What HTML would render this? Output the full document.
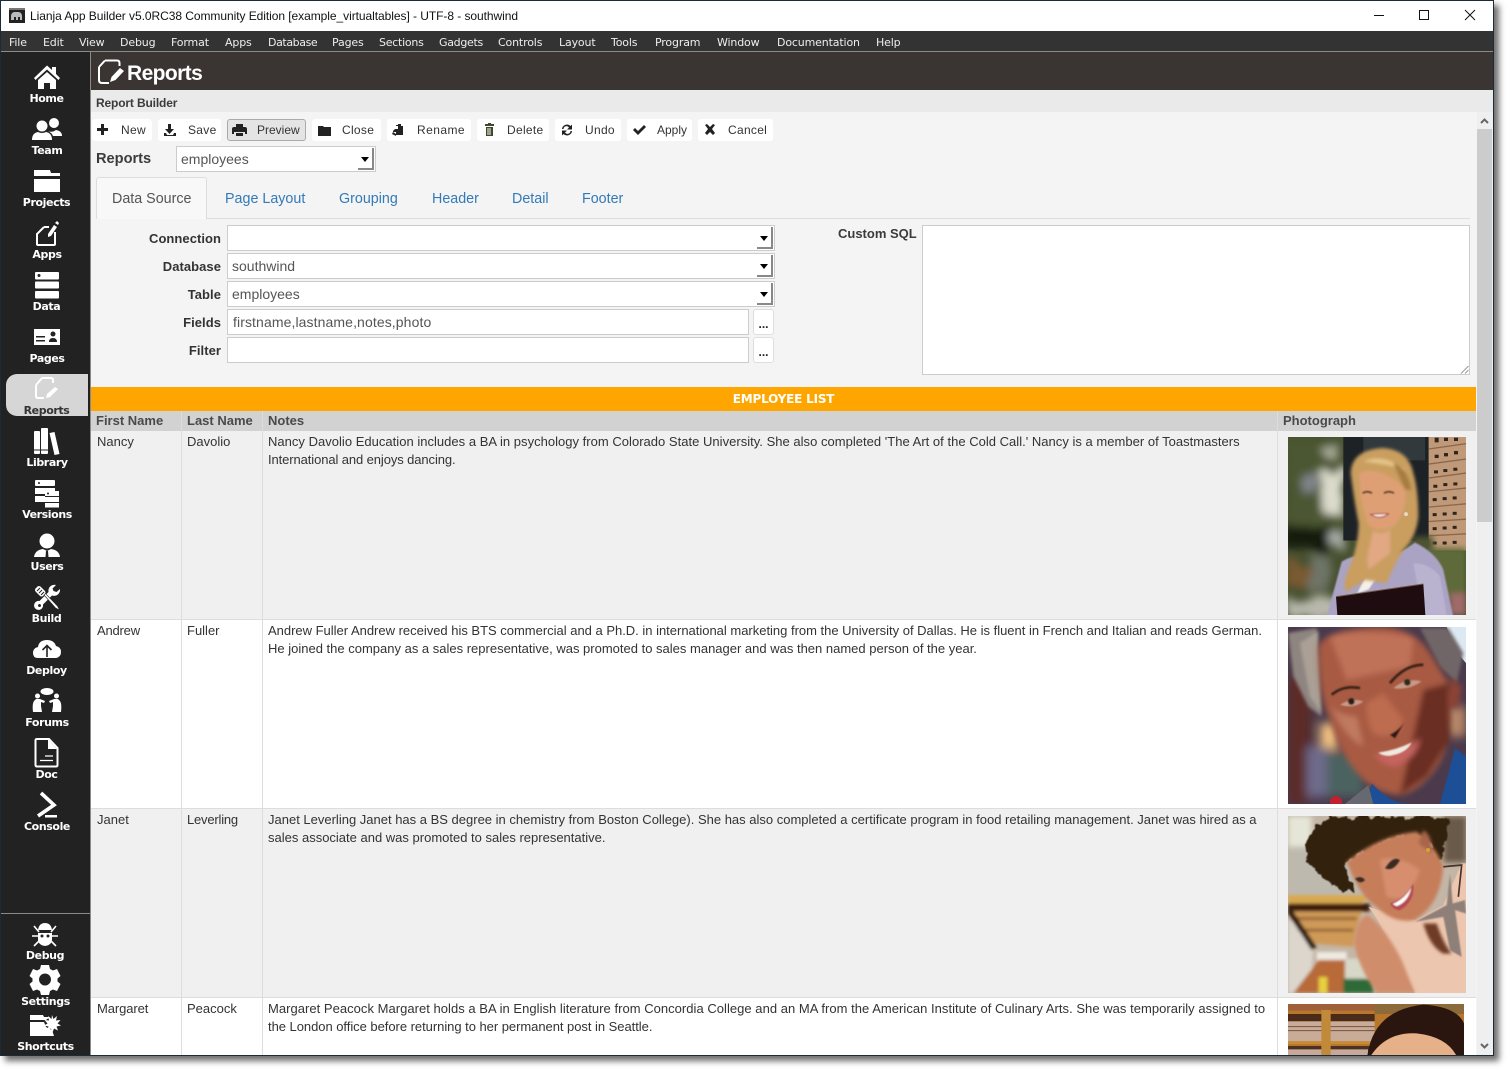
<!DOCTYPE html>
<html><head><meta charset="utf-8"><title>Lianja App Builder</title>
<style>
html,body{margin:0;padding:0;background:#fff;width:1509px;height:1071px;overflow:hidden}
*{box-sizing:border-box}
body{font-family:"Liberation Sans",sans-serif;color:#333;position:relative}
.a,.t{position:absolute}
.t{white-space:nowrap;line-height:18px}
#win{position:absolute;left:0;top:0;width:1494px;height:1056px;background:#f4f4f4;border:1px solid #1c2b38;box-shadow:5px 5px 6px rgba(60,60,60,.75);overflow:hidden}
#app{position:absolute;left:-1px;top:-1px;width:1494px;height:1056px}
.m{position:absolute;top:34px;font:11px/18px "DejaVu Sans",sans-serif;color:#eee;white-space:nowrap;letter-spacing:-.15px}
.b{position:absolute;top:119px;height:22px;background:#fff;border-radius:3px}
.bt{position:absolute;top:120px;font-size:12px;line-height:20px;color:#333;white-space:nowrap;letter-spacing:.3px}
.tab{position:absolute;top:190px;font-size:14.3px;line-height:18px;color:#337ab7;white-space:nowrap}
.lab{position:absolute;right:1273px;font-size:13px;font-weight:bold;line-height:20px;color:#333;white-space:nowrap;letter-spacing:.05px}
.box{position:absolute;background:#fff;border:1px solid #ccc;height:26px;font-size:14px;line-height:24px;padding-left:4px;color:#555;white-space:nowrap}
.dd i{position:absolute;right:1px;bottom:1px;width:16px;height:22px;border-right:2px solid #888;border-bottom:2px solid #888}
.dd i:after{content:"";position:absolute;left:3px;top:9px;border:4.500px solid transparent;border-top:5px solid #000;border-bottom:0}
.dots{position:absolute;left:753px;width:21px;height:26px;background:#fff;border:1px solid #ddd;border-radius:3px;font-size:12px;line-height:28px;text-align:center;color:#222;font-weight:bold}
.hc{position:absolute;top:411px;height:20px;background:#d2d2d2;font-size:13px;font-weight:bold;line-height:19px;color:#4a4a4a;padding-left:5px;white-space:nowrap}
.row{position:absolute;left:91px;width:1386px;height:189px;border-bottom:1px solid #ddd}
.v{position:absolute;width:1px;background:#ddd}
.c{position:absolute;font-size:13px;line-height:18px;color:#333;white-space:nowrap;margin-top:1px}
.n{letter-spacing:0}
svg{position:absolute;display:block;overflow:hidden}
</style></head>
<body>
<div id="win"><div id="app">

<!-- title bar -->
<div class="a" style="left:0;top:1px;width:1494px;height:30px;background:#fff"></div>
<svg style="left:9px;top:8px" width="16" height="15" viewBox="0 0 16 15"><rect width="16" height="15" fill="#222"/><rect x="0" y="0" width="16" height="2" fill="#777"/><path d="M2 12V8q0-3 3-4h5q3 1 3 4v4h-2V9H9v3H7V9H5v3zM13 8l1.500 3" fill="#bbb"/></svg>
<div class="t" style="left:30px;top:7px;font:12px/18px 'Liberation Sans',sans-serif;color:#111;letter-spacing:-.055px">Lianja App Builder v5.0RC38 Community Edition [example_virtualtables] - UTF-8 - southwind</div>
<svg style="left:1370px;top:6px" width="112" height="20" viewBox="0 0 112 20" fill="none" stroke="#111"><path d="M4 9.500H14"/><rect x="49.500" y="4.500" width="9" height="9"/><path d="M95 4l10 10M105 4L95 14"/></svg>

<!-- menu -->
<div class="a" style="left:0;top:31px;width:1494px;height:20px;background:#333"></div>
<div class="a" style="left:0;top:51px;width:1494px;height:1px;background:#8a8a86"></div>
<span class="m" style="left:9px">File</span><span class="m" style="left:43px">Edit</span><span class="m" style="left:79px">View</span><span class="m" style="left:120px">Debug</span><span class="m" style="left:171px">Format</span><span class="m" style="left:225px">Apps</span><span class="m" style="left:268px;letter-spacing:-.4px">Database</span><span class="m" style="left:332px">Pages</span><span class="m" style="left:379px;letter-spacing:-.25px">Sections</span><span class="m" style="left:439px;letter-spacing:-.3px">Gadgets</span><span class="m" style="left:498px">Controls</span><span class="m" style="left:559px">Layout</span><span class="m" style="left:611px">Tools</span><span class="m" style="left:655px">Program</span><span class="m" style="left:717px">Window</span><span class="m" style="left:777px">Documentation</span><span class="m" style="left:876px">Help</span>

<!-- header -->
<div class="a" style="left:91px;top:52px;width:1403px;height:38px;background:#3a3533"></div>
<svg style="left:97px;top:58px" width="30" height="28" viewBox="0 0 30 28"><path d="M8 2.500h12q2.500 0 2.500 2.500v3M2 9L8 2.500M2 9v13q0 3 3 3h7" fill="none" stroke="#fff" stroke-width="2"/><path d="M13 24l1.500-5L23 10l4 3-8.500 9z" fill="#fff"/></svg>
<div class="t" style="left:127px;top:62px;font-size:21px;line-height:24px;font-weight:bold;color:#fff;letter-spacing:-.6px">Reports</div>
<div class="a" style="left:91px;top:90px;width:1403px;height:22px;background:#eaeaea"></div>
<div class="t" style="left:96px;top:94px;font-size:12px;font-weight:bold;color:#3b3b3b;letter-spacing:-.15px">Report Builder</div>

<!-- toolbar -->
<div class="b" style="left:92px;width:60px"></div>
<div class="b" style="left:158px;width:63px"></div>
<div class="b" style="left:227px;width:79px;background:#e4e4e4;border:1px solid #aaa"></div>
<div class="b" style="left:312px;width:69px"></div>
<div class="b" style="left:387px;width:84px"></div>
<div class="b" style="left:477px;width:72px"></div>
<div class="b" style="left:555px;width:66px"></div>
<div class="b" style="left:627px;width:65px"></div>
<div class="b" style="left:698px;width:75px"></div>
<span class="bt" style="left:121px">New</span><span class="bt" style="left:188px">Save</span><span class="bt" style="left:257px;letter-spacing:0">Preview</span><span class="bt" style="left:342px">Close</span><span class="bt" style="left:417px;letter-spacing:.45px">Rename</span><span class="bt" style="left:507px">Delete</span><span class="bt" style="left:585px">Undo</span><span class="bt" style="left:657px;letter-spacing:0">Apply</span><span class="bt" style="left:728px">Cancel</span>
<svg style="left:0;top:110px" width="800" height="40" viewBox="0 110 800 40" fill="#222">
<path d="M101 124h3v4h4v3h-4v4h-3v-4h-4v-3h4z"/>
<path d="M168 124h3v5h3l-4.500 5-4.500-5h3zM164 133h2l1 2h6l1-2h2v3h-12z"/>
<path d="M236 124h7v3h2q2 0 2 2v5h-2v-2h-11v2h-2v-5q0-2 2-2h2zM236 133h7v3h-7z"/>
<path d="M318 126h5l1 1h7v9h-13zM318 128h13v1h-13z"/>
<path d="M398 124h3v2h2v9h-7v-3h-3v-1l2-2h3v-3h-2v-1h2zM393 132l3 2v2l-4-2z"/>
<g fill="#3d4a2a"><path d="M488 123h3v1h3v2h-9v-2h3zM486 127h7v9h-7zM487.500 128v7h1v-7zM489.500 128v7h1v-7z" fill-rule="evenodd"/></g>
<path d="M562 129a5 5 0 0 1 8.500-3l1.500-1.500v5h-5l2-2a3 3 0 0 0-5.500 1.500zM572 131a5 5 0 0 1-8.500 3L562 135.500v-5h5l-2 2a3 3 0 0 0 5.500-1.500z"/>
<path d="M633 130l2-2 3 3 6-6 2 2-8 8z"/>
<path d="M705 125l2-1 3 3 3-3 2 1-3 4 3 4-2 2-3-3-3 3-2-2 3-4z"/>
</svg>

<!-- reports select -->
<div class="t" style="left:96px;top:150px;font-size:14.600px;font-weight:bold;color:#3b3b3b">Reports</div>
<div class="box dd" style="left:176px;top:146px;width:200px;font-size:14px;line-height:25px"><span>employees</span><i></i></div>

<!-- tabs -->
<div class="a" style="left:96px;top:218px;width:1374px;height:1px;background:#ddd"></div>
<div class="a" style="left:96px;top:177px;width:111px;height:42px;background:#f8f8f8;border:1px solid #ddd;border-bottom:0;border-radius:3px 3px 0 0"></div>
<div class="tab" style="left:112px;color:#555">Data Source</div>
<div class="tab" style="left:225px">Page Layout</div><div class="tab" style="left:339px">Grouping</div><div class="tab" style="left:432px">Header</div><div class="tab" style="left:512px">Detail</div><div class="tab" style="left:582px">Footer</div>

<!-- form -->
<div class="lab" style="top:229px">Connection</div><div class="lab" style="top:257px">Database</div><div class="lab" style="top:285px">Table</div><div class="lab" style="top:313px">Fields</div><div class="lab" style="top:341px">Filter</div>
<div class="box dd" style="left:227px;top:225px;width:548px"><i></i></div>
<div class="box dd" style="left:227px;top:253px;width:548px">southwind<i></i></div>
<div class="box dd" style="left:227px;top:281px;width:548px">employees<i></i></div>
<div class="box" style="left:227px;top:309px;width:522px;padding-left:5px;letter-spacing:.1px">firstname,lastname,notes,photo</div>
<div class="box" style="left:227px;top:337px;width:522px"></div>
<div class="dots" style="top:309px">...</div><div class="dots" style="top:337px">...</div>
<div class="t" style="left:838px;top:225px;font-size:13px;font-weight:bold;color:#3b3b3b">Custom&nbsp;SQL</div>
<div class="a" style="left:922px;top:225px;width:548px;height:150px;background:#fff;border:1px solid #ccc"></div>
<svg style="left:1458px;top:363px" width="12" height="12" stroke="#999" fill="none"><path d="M3 10.500L10.500 3M7 10.500L10.500 7"/></svg>

<!-- table -->
<div class="a" style="left:91px;top:387px;width:1385px;height:24px;background:#ffa500;color:#fff;font:bold 12px/25px 'DejaVu Sans',sans-serif;text-align:center;letter-spacing:-.2px">EMPLOYEE LIST</div>
<div class="hc" style="left:91px;width:90px">First Name</div><div class="hc" style="left:182px;width:80px">Last Name</div><div class="hc" style="left:263px;width:1014px">Notes</div><div class="hc" style="left:1278px;width:198px">Photograph</div>
<div class="row" style="top:431px;background:#f0f0f0"></div>
<div class="row" style="top:620px;background:#fff"></div>
<div class="row" style="top:809px;background:#f0f0f0"></div>
<div class="row" style="top:998px;background:#fff;height:58px;border:0"></div>
<div class="v" style="left:181px;top:411px;height:645px"></div><div class="v" style="left:262px;top:411px;height:645px"></div><div class="v" style="left:1277px;top:411px;height:645px"></div>
<div class="a" style="left:1476px;top:387px;width:1px;height:669px;background:#f4f4f4"></div>

<div class="c" style="left:97px;top:432px">Nancy</div><div class="c" style="left:187px;top:432px">Davolio</div>
<div class="c n" style="left:268px;top:432px;letter-spacing:.02px">Nancy Davolio Education includes a BA in psychology from Colorado State University. She also completed 'The Art of the Cold Call.' Nancy is a member of Toastmasters</div>
<div class="c n" style="left:268px;top:450px;letter-spacing:-.1px">International and enjoys dancing.</div>
<div class="c" style="left:97px;top:621px;letter-spacing:-.2px">Andrew</div><div class="c" style="left:187px;top:621px">Fuller</div>
<div class="c n" style="left:268px;top:621px;letter-spacing:-.01px">Andrew Fuller Andrew received his BTS commercial and a Ph.D. in international marketing from the University of Dallas. He is fluent in French and Italian and reads German.</div>
<div class="c n" style="left:268px;top:639px">He joined the company as a sales representative, was promoted to sales manager and was then named person of the year.</div>
<div class="c" style="left:97px;top:810px">Janet</div><div class="c" style="left:187px;top:810px;letter-spacing:-.2px">Leverling</div>
<div class="c n" style="left:268px;top:810px">Janet Leverling Janet has a BS degree in chemistry from Boston College). She has also completed a certificate program in food retailing management. Janet was hired as a</div>
<div class="c n" style="left:268px;top:828px">sales associate and was promoted to sales representative.</div>
<div class="c" style="left:97px;top:999px;letter-spacing:-.1px">Margaret</div><div class="c" style="left:187px;top:999px">Peacock</div>
<div class="c n" style="left:268px;top:999px;letter-spacing:.03px">Margaret Peacock Margaret holds a BA in English literature from Concordia College and an MA from the American Institute of Culinary Arts. She was temporarily assigned to</div>
<div class="c n" style="left:268px;top:1017px;letter-spacing:-.04px">the London office before returning to her permanent post in Seattle.</div>

<!-- photo filters -->
<svg width="0" height="0" style="left:0;top:0"><defs>
<filter id="b2" x="-20%" y="-20%" width="140%" height="140%"><feGaussianBlur stdDeviation="2"/></filter>
<filter id="b5" x="-20%" y="-20%" width="140%" height="140%"><feGaussianBlur stdDeviation="5"/></filter>
<filter id="b8" x="-20%" y="-20%" width="140%" height="140%"><feGaussianBlur stdDeviation="9"/></filter>
<filter id="b16" x="-30%" y="-30%" width="160%" height="160%"><feGaussianBlur stdDeviation="14"/></filter>
<filter id="curl" x="-20%" y="-20%" width="140%" height="140%"><feTurbulence type="fractalNoise" baseFrequency=".035" numOctaves="3" seed="7" result="n"/><feDisplacementMap in="SourceGraphic" in2="n" scale="34" xChannelSelector="R" yChannelSelector="G"/><feGaussianBlur stdDeviation="1.500"/></filter>
<filter id="fol" x="-20%" y="-20%" width="140%" height="140%"><feTurbulence type="fractalNoise" baseFrequency=".02" numOctaves="2" seed="3" result="n"/><feDisplacementMap in="SourceGraphic" in2="n" scale="50" xChannelSelector="R" yChannelSelector="G"/><feGaussianBlur stdDeviation="13"/></filter>
</defs></svg>

<!-- Nancy -->
<svg style="left:1288px;top:437px" width="178" height="178" viewBox="24 22 534 533" preserveAspectRatio="none">
<rect x="24" y="22" width="534" height="533" fill="#46502f"/>
<g filter="url(#fol)">
<rect x="20" y="20" width="170" height="300" fill="#4c5633"/>
<rect x="125" y="125" width="65" height="130" fill="#dcdccc"/>
<rect x="125" y="55" width="60" height="40" fill="#a8ac98"/>
<rect x="75" y="130" width="40" height="50" fill="#80858a"/>
<rect x="20" y="290" width="130" height="70" fill="#181a10"/>
<rect x="20" y="400" width="80" height="70" fill="#7a5a30"/>
<rect x="90" y="370" width="60" height="120" fill="#6e7468"/>
<rect x="20" y="505" width="160" height="60" fill="#b8b8ac"/>
<rect x="150" y="300" width="45" height="50" fill="#a8aca8"/>
</g>
<rect x="190" y="22" width="256" height="310" fill="#1d2226"/>
<rect x="250" y="22" width="185" height="70" fill="#31393d"/>
<rect x="446" y="22" width="112" height="340" fill="#c09a78"/>
<g stroke="#8a6850" stroke-width="4"><path d="M446 58L558 42M446 103L558 88M446 145L558 130M446 186L558 175M446 232L558 222M446 275L558 268M446 318L558 312"/></g>
<g fill="#30241e"><rect x="464" y="24" width="12" height="14"/><rect x="492" y="24" width="12" height="10"/><rect x="522" y="24" width="12" height="10"/><rect x="464" y="75" width="12" height="10"/><rect x="492" y="70" width="12" height="10"/><rect x="522" y="64" width="12" height="10"/><rect x="462" y="122" width="12" height="9"/><rect x="490" y="118" width="12" height="9"/><rect x="520" y="114" width="12" height="9"/><rect x="460" y="165" width="12" height="9"/><rect x="490" y="160" width="12" height="9"/><rect x="520" y="158" width="12" height="9"/><rect x="458" y="205" width="12" height="9"/><rect x="488" y="202" width="12" height="9"/><rect x="518" y="200" width="12" height="9"/><rect x="458" y="250" width="12" height="9"/><rect x="488" y="248" width="12" height="9"/><rect x="518" y="246" width="12" height="9"/><rect x="458" y="292" width="12" height="9"/><rect x="488" y="290" width="12" height="9"/><rect x="518" y="288" width="12" height="9"/><rect x="458" y="335" width="12" height="9"/><rect x="488" y="335" width="12" height="9"/><rect x="518" y="333" width="12" height="9"/></g>
<g filter="url(#b8)"><rect x="440" y="355" width="118" height="150" fill="#5f6a3a"/><rect x="510" y="490" width="48" height="65" fill="#a06a6a"/><rect x="400" y="320" width="60" height="40" fill="#4d5230"/></g>
<g filter="url(#b2)">
<path d="M140 560L185 395Q240 360 300 400Q360 370 405 338Q470 370 490 420L520 560z" fill="#aaa3c4"/>
<path d="M400 400Q450 400 480 440L500 555H430z" fill="#b9b3d0"/>
<path d="M232 490L262 430H298L266 478z" fill="#f4f0e8"/>
</g>
<g filter="url(#b5)">
<path d="M212 130Q215 60 310 55Q385 60 400 130Q415 180 415 260Q410 320 370 360Q340 410 320 460L255 450L200 485Q185 470 205 420Q235 350 236 280Q225 230 212 130z" fill="#c99e5f"/>
<path d="M238 130Q300 105 375 175Q385 240 340 290Q300 310 265 285Q240 230 238 130z" fill="#df9f74"/>
<path d="M280 300Q300 320 330 300L330 370L265 420L262 380z" fill="#e2a884"/>
<path d="M250 95Q310 68 385 125Q360 112 300 102z" fill="#e6c588"/>
<path d="M340 100Q380 110 395 180L375 180z" fill="#a67c40"/>
</g>
<g filter="url(#b2)">
<path d="M272 254Q298 250 325 252Q300 272 272 254z" fill="#f2e8de" stroke="#a94f46" stroke-width="3"/>
<path d="M248 190Q262 182 276 190M312 190Q326 182 342 190" stroke="#5a4028" stroke-width="5" fill="none"/>
</g>
<circle cx="378" cy="253" r="6" fill="#e8d8c0"/>
<path d="M168 500L430 462L436 555H172z" fill="#1f0c10"/>
<path d="M168 500L430 462" stroke="#7a5a48" stroke-width="3"/>
</svg>

<!-- Andrew -->
<svg style="left:1288px;top:627px" width="178" height="177" viewBox="24 22 534 530" preserveAspectRatio="none">
<rect x="24" y="22" width="534" height="530" fill="#4a3a4c"/>
<g filter="url(#b16)">
<rect x="24" y="170" width="70" height="380" fill="#5c2a28"/>
<rect x="120" y="310" width="55" height="80" fill="#f0c080"/>
<rect x="100" y="400" width="150" height="130" fill="#4c6460"/>
<rect x="500" y="260" width="58" height="90" fill="#b88868"/>
<rect x="80" y="380" width="60" height="150" fill="#6e6a8c"/>
</g>
<path d="M500 22H558V130L525 90z" fill="#dde9f2"/>
<g filter="url(#b5)"><path d="M24 40L110 25 120 120 125 290 85 260 40 170z" fill="#8e8580"/><path d="M420 25H505L550 100L530 190L480 140z" fill="#6f6668"/><path d="M60 70L115 35 115 120 125 280 90 230z" fill="#aaa096"/></g>
<g filter="url(#b8)">
<path d="M115 80Q140 25 300 22Q400 22 450 100L505 190Q520 300 500 380Q460 490 370 525Q300 525 250 480Q180 410 150 300Q115 230 115 80z" fill="#a85a42"/>
<path d="M150 50Q280 25 400 55L390 140L200 180z" fill="#c07258"/>
<path d="M510 170L545 200L535 265L510 260z" fill="#8d4334"/>
<path d="M430 210L505 190L510 360L440 470L360 525z" fill="#6a2e22"/>
<path d="M260 250L310 220L370 300L360 330Q320 360 280 340Q260 310 260 250z" fill="#bd6c50"/>
<path d="M280 400Q350 410 420 355Q410 420 340 440Q300 430 280 400z" fill="#c6645e"/>
<path d="M150 250Q170 290 230 290L250 380Q190 350 150 250z" fill="#c07a60"/>
</g>
<g filter="url(#b2)">
<path d="M330 345Q360 330 375 305L345 355z" fill="#2e1512"/>
<path d="M295 398Q350 390 395 368Q380 400 330 408Q305 408 295 398z" fill="#efe8de"/>
<path d="M155 225Q190 195 240 205M330 190Q375 135 430 135" stroke="#3a2018" stroke-width="8" fill="none"/>
<path d="M180 255Q215 232 250 245Q220 268 180 255zM340 205Q380 172 425 185Q385 213 340 205z" fill="#c89a88"/>
<circle cx="214" cy="245" r="10" fill="#2a1c12"/><circle cx="382" cy="188" r="10" fill="#2a2a18"/>
</g>
<path d="M265 552L275 490Q330 550 380 552zM480 552L525 385L558 410V552z" fill="#1c4f96"/>
<path d="M195 552L265 495L280 552z" fill="#666a70"/><circle cx="168" cy="546" r="18" fill="#c02030"/>
</svg>

<!-- Janet -->
<svg style="left:1288px;top:816px" width="178" height="177" viewBox="24 18 534 530" preserveAspectRatio="none">
<rect x="24" y="18" width="534" height="530" fill="#c4b6a6"/>
<g filter="url(#b8)">
<rect x="24" y="18" width="70" height="100" fill="#e6e6d8"/>
<rect x="24" y="110" width="240" height="150" fill="#bdb9ae"/>
<rect x="490" y="18" width="70" height="140" fill="#6a5a48"/>
</g>
<g filter="url(#b5)">
<path d="M24 255H270L240 285H24z" fill="#d8a850"/>
<rect x="24" y="280" width="245" height="24" fill="#3e1c0e"/>
<path d="M30 304H245L220 410L100 400z" fill="#cf9a58"/>
<path d="M30 325H230M50 360H220" stroke="#8a5a2e" stroke-width="8"/>
<path d="M24 320L100 420L90 548H24z" fill="#dcd6cc"/>
<path d="M40 548L120 445H205L190 548z" fill="#b86a38"/>
<rect x="110" y="425" width="90" height="24" fill="#eeeae2"/>
<rect x="190" y="505" width="90" height="43" fill="#2e6a38"/>
<rect x="116" y="500" width="26" height="48" fill="#e8d040"/>
<rect x="195" y="445" width="70" height="60" fill="#d8d8c8"/>
<path d="M24 280L110 410L95 420L24 310z" fill="#2e1a10"/>
</g>
<path d="M265 290L405 330 490 285 545 160 558 160V548H405L350 450Q300 330 265 290z" fill="#ecc6ae"/>
<g filter="url(#b5)"><path d="M222 400Q230 320 265 315Q320 360 365 450L405 548H290Q240 480 222 400z" fill="#d08d6c"/><path d="M470 340Q490 400 515 430H490Q450 410 430 340z" fill="#6e3a28"/></g>
<path d="M75 125Q85 30 180 22H505Q505 90 480 160L450 100L410 70Q290 90 195 160Q210 220 225 248Q160 230 110 190Q80 160 75 125z" fill="#33200f" filter="url(#curl)"/>
<g filter="url(#b5)">
<path d="M200 155Q300 75 410 65Q470 110 490 170Q480 290 400 330Q340 340 290 290Q240 260 200 155z" fill="#c67e5a"/>
<path d="M430 60Q460 80 455 130L415 100z" fill="#a8654a"/>
<path d="M300 150Q350 130 420 180L380 270L320 260z" fill="#d68e6e"/>
</g>
<g filter="url(#b2)">
<path d="M225 205Q245 195 255 210Q240 225 225 205zM315 175Q340 135 360 150Q340 185 315 175z" fill="#3a2a22"/>
<path d="M330 280Q375 265 400 220Q405 275 360 300Q340 300 330 280z" fill="#b84852"/>
<path d="M338 282Q375 265 394 232Q385 275 350 288z" fill="#fff"/>
<path d="M405 335L500 285 510 190 518 280 555 270 558 310 525 300 545 440 510 420 490 320z" fill="#8e7f78"/>
</g>
<circle cx="444" cy="120" r="6" fill="#d8a030"/>
<path d="M490 170Q545 165 545 165L535 260" fill="none" stroke="#4a3028" stroke-width="5"/>
</svg>

<!-- Margaret -->
<svg style="left:1288px;top:1004px" width="176" height="52" viewBox="24 582 528 156" preserveAspectRatio="none">
<rect x="24" y="582" width="528" height="156" fill="#b8782c"/>
<rect x="24" y="582" width="528" height="20" fill="#a0603a"/>
<rect x="24" y="612" width="260" height="22" fill="#4a2a18"/>
<rect x="24" y="634" width="260" height="60" fill="#c8ac98"/>
<path d="M24 650H284M24 662H284" stroke="#7a5040" stroke-width="3"/>
<rect x="24" y="694" width="260" height="8" fill="#c88a34"/>
<rect x="24" y="708" width="260" height="30" fill="#4c3022"/>
<rect x="24" y="718" width="240" height="20" fill="#c8a898"/>
<rect x="124" y="600" width="28" height="138" fill="#c08a38"/>
<rect x="284" y="582" width="268" height="30" fill="#8c6a3a"/>
<path d="M262 738Q280 600 430 584Q530 590 552 640V738z" fill="#2a160e"/>
<path d="M272 738Q320 665 410 670Q500 680 530 738z" fill="#e6b088"/>
</svg>

<!-- scrollbar -->
<div class="a" style="left:1477px;top:112px;width:16px;height:944px;background:#efefef"></div>
<div class="a" style="left:1477px;top:129px;width:15px;height:393px;background:#ccc"></div>
<svg style="left:1477px;top:112px" width="16" height="17" fill="none" stroke="#666" stroke-width="2"><path d="M4 11l3.500-3.500L11 11"/></svg>
<svg style="left:1477px;top:1038px" width="16" height="17" fill="none" stroke="#666" stroke-width="2"><path d="M4 6l3.500 3.500L11 6"/></svg>

<!-- sidebar -->
<div class="a" style="left:0;top:52px;width:90px;height:1004px;background:#222"></div>
<div class="a" style="left:90px;top:52px;width:1px;height:1004px;background:#8a8a8a"></div>
<div class="a" style="left:1px;top:913px;width:89px;height:1px;background:#8a8a8a"></div>
<div class="a" style="left:6px;top:374px;width:82px;height:42px;background:#d6d6d6;border-radius:11px 0 0 11px"></div>
<svg style="left:0;top:0" width="90" height="1056" viewBox="0 0 90 1056" fill="#fff">
<g font-family="'DejaVu Sans',sans-serif" font-weight="bold" font-size="11" text-anchor="middle" letter-spacing="-.4">
<text x="46.500" y="102">Home</text><text x="47" y="154">Team</text><text x="46.500" y="206">Projects</text><text x="47" y="258">Apps</text><text x="46.500" y="310">Data</text><text x="47" y="362">Pages</text><text x="46.500" y="414" fill="#333">Reports</text><text x="47" y="466">Library</text><text x="47" y="518">Versions</text><text x="47" y="570">Users</text><text x="46.500" y="622">Build</text><text x="46.500" y="674">Deploy</text><text x="47" y="726">Forums</text><text x="46.500" y="778">Doc</text><text x="47" y="830">Console</text><text x="45" y="959">Debug</text><text x="45.500" y="1005">Settings</text><text x="45.500" y="1050">Shortcuts</text></g>
<!-- home -->
<path d="M34 78L47 65.500 52 70V67h4v7l4 4-1.500 2L47 69.500 35.500 80z"/><path d="M38 80L47 72l9 8v9H50v-6h-6v6h-6z"/>
<!-- team -->
<circle cx="42" cy="126" r="5.500"/><circle cx="54" cy="123" r="5"/><path d="M32 140q0-7 6-8 4 2 8 0 6 1 6 8zM48 131q4 2 8-1 6 1 6 6H53q-1-3-5-5z"/>
<!-- projects -->
<path d="M34 170h16l1 3h9v3H34zM34 179h26v13H34z"/>
<!-- apps -->
<g fill="none" stroke="#fff" stroke-width="2"><path d="M44 227l-7 7v10q0 1 1 1h16q1 0 1-1v-12"/><path d="M44 227h5"/></g><path d="M48 234l6-9 3 2-6 9-3 1z"/><path d="M55 223l2-2 2 2-1 2z"/>
<!-- data -->
<rect x="35" y="272" width="24" height="7.500" rx="1"/><rect x="35" y="281.500" width="24" height="7" rx="1"/><rect x="35" y="291" width="24" height="7.500" rx="1"/><circle cx="39" cy="275.500" r="1.500" fill="#222"/>
<!-- pages -->
<rect x="34" y="329" width="26" height="16"/><g fill="#222"><rect x="36" y="336" width="9" height="1.500"/><rect x="36" y="340" width="9" height="1.500"/><circle cx="53" cy="334" r="2.500"/><path d="M49 342q0-4 4-4t4 4z"/></g>
<!-- reports -->
<g fill="none" stroke="#fff" stroke-width="2"><path d="M42 378h9q2 0 2 2v3M36 385l6-7M36 385v11q0 2 2 2h6"/></g><path d="M46 398l1-4 8-7 3 2-8 8z" fill="#fff"/>
<!-- library -->
<rect x="34" y="431" width="6" height="23" rx="1"/><rect x="41" y="428" width="7" height="26" rx="1"/><path d="M49.500 433l5-1 5 22-5 1z"/><path d="M34 450h6M41 450h7" stroke="#222"/>
<!-- versions -->
<rect x="35" y="480" width="20" height="6" rx="1"/><rect x="35" y="488" width="20" height="6"/><rect x="35" y="496" width="10" height="6"/><rect x="45" y="491" width="14" height="5"/><rect x="45" y="497" width="14" height="5"/><rect x="45" y="503" width="14" height="4.500"/><circle cx="39" cy="483" r="1" fill="#222"/><circle cx="48" cy="493.500" r="1" fill="#222"/>
<!-- users -->
<circle cx="47" cy="541" r="7.500"/><path d="M34 557q1-7 9-8l4 2 4-2q8 1 9 8z"/><path d="M46 551h2l.5 6h-3z" fill="#222"/>
<!-- build: wrench then screwdriver -->
<path fill-rule="evenodd" d="M60 589a6 6 0 0 1-8 6.500L43 604.500a4.500 4.500 0 1 1-3.500-3.500l9-9A6 6 0 0 1 56 585l-3.500 3.500 1 2.500 3 1zM39.500 604a1.500 1.500 0 1 0 .01 0z"/>
<path d="M35 588.500l2.500-2.500q2-1 3.500.5l4 4q1.500 1.500.5 3.500l-2.500 2.500q-2 1-3.500-.5l-4-4q-1.500-1.500-.5-3.500z" stroke="#222" stroke-width=".8"/>
<path d="M37 591l3-3M39 593l3-3M41 595l3-3" stroke="#222"/>
<path d="M44 595l1.500-1.500 12 12.500 2 4-4-2z" stroke="#222" stroke-width=".6"/>
<!-- deploy -->
<path d="M38 658q-5 0-5-5t5-6q1-7 9-7 7 0 9 6 5 1 5 6t-5 6z"/><path d="M47 657v-11M42.500 650l4.500-4.500 4.500 4.500" fill="none" stroke="#222" stroke-width="1.600"/>
<!-- forums -->
<ellipse cx="47" cy="691.500" rx="6.500" ry="3.500"/><circle cx="37.500" cy="696" r="2.500"/><circle cx="56.500" cy="696" r="2.500"/><path d="M33 712q-1-8 1-11l2-2h4l5 2-1 2-3-1v4l1 6zM61 712q1-8-1-11l-2-2h-4l-5 2 1 2 3-1v4l-1 6z"/>
<!-- doc -->
<path d="M37 739h12l8.500 9v17q0 1.500-1.500 1.500H37q-1.500 0-1.500-1.500V740.500q0-1.500 1.500-1.500z" fill="none" stroke="#fff" stroke-width="2"/><path d="M48 739v10h9z"/><path d="M45 756h8M40 760.500h13" stroke="#fff" stroke-width="1.300"/>
<!-- console -->
<path d="M41 793l13 12-16 11" fill="none" stroke="#fff" stroke-width="3.600"/><rect x="45" y="815" width="12" height="2.500"/>
<!-- debug -->
<path d="M38 930q1-7 7-7t7 7z"/><path d="M38 933h14v6q0 6-7 7-7-1-7-7z"/><circle cx="42" cy="936" r="1.500" fill="#222"/><circle cx="48" cy="936" r="1.500" fill="#222"/><path d="M34 926l5 6M56 926l-5 6M32 936h6M58 936h-6M34 946l5-5M56 946l-5-5" stroke="#fff" stroke-width="1.600"/>
<!-- settings -->
<path fill-rule="evenodd" d="M41 965h8l1 4 3 1.500 4-1.500 3.500 7-3 2.500v3l3 2.500-3.500 7-4-1.500-3 1.500-1 4h-8l-1-4-3-1.500-4 1.500-3.500-7 3-2.500v-3l-3-2.500 3.500-7 4 1.500 3-1.500zM45 973.500a6 6 0 1 0 .01 0z"/>
<!-- shortcuts -->
<path d="M30 1015h13l1 2h6l-4 3h-16zM30 1022h14l2 5 6 3 2 6H30z"/><path d="M52 1015l1.500 4 3.500-3-1 4.500 4.500-.5-3 3.500 3.500 2-4.500 1 1.500 4-4-2-1.500 4-1.500-4-4 2 1.500-4-4.500-1 3.500-2-3-3.500 4.500.5-1-4.500 3.500 3z"/>
</svg>

</div></div>
</body></html>
